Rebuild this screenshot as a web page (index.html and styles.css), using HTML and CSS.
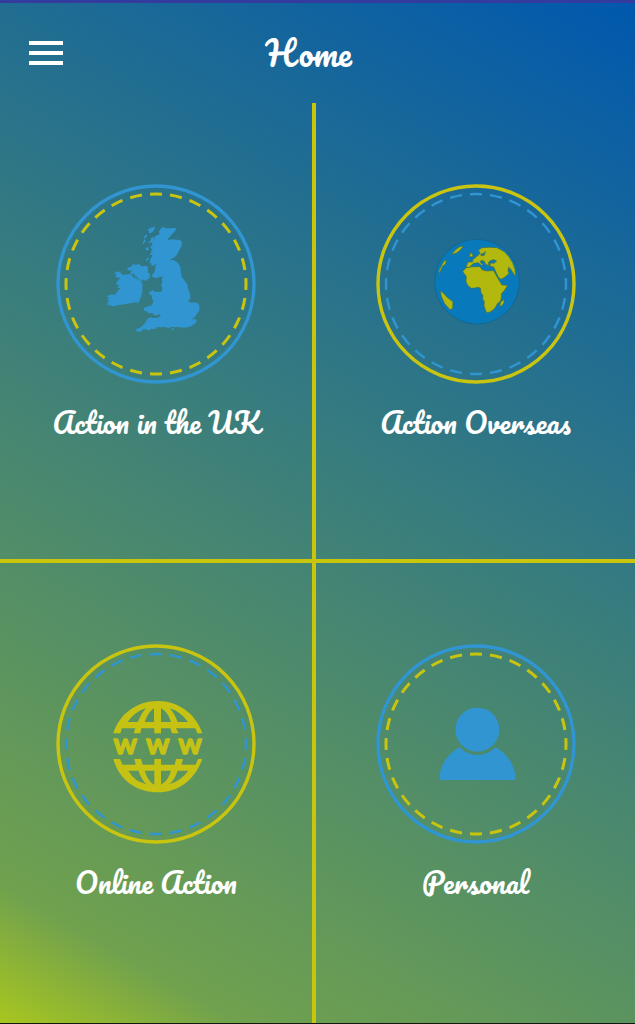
FILE: index.html
```html
<!DOCTYPE html>
<html lang="en">
<head>
<meta charset="utf-8">
<meta name="viewport" content="width=device-width, initial-scale=1">
<title>Home</title>
<link rel="stylesheet" href="styles.css">
</head>
<body>
<div class="app">
  <header class="header">
    <button class="menu" type="button" aria-label="Open menu">
      <span class="menu-bar"></span>
      <span class="menu-bar"></span>
      <span class="menu-bar"></span>
    </button>
    <h1 class="title">Home</h1>
  </header>
  <main class="grid">
    <a class="tile" href="#uk">
      <svg class="badge" viewBox="0 0 200 200" aria-hidden="true">
        <circle class="ring blue-line" cx="100" cy="100" r="98"/>
        <circle class="dashes yellow-line" cx="100" cy="100" r="90" pathLength="280"/>
        <g class="blue" transform="translate(39 31) scale(.33333)">
          <path d="M205 35l5 5 32-1 1 6-12 13-9 10-5 8 12-3 25 2 8 6-2 10-7 15-7 13-10 9-12 7 14 1 10 7 8 13 2 17 2 13 9 11 8 11 3 16 5 11 1 16-6 6 6 6 10-1 13 3 5 9-2 14-7 10-7 10-9 5 14 0 3 5-8 10-13 7-17 3-18-2-10 1-12-2-7 5-10-4-15 1-9-1-7 6-12-1-6 6-10-4-10 1-7 8-7-4-7 1 3-6 11-5 9-7 7-8 6-11 9-5 10 2 13-1 9-7-6-3-12 4-8-8-13 1-4-7-8-1-1-8 10-4 14-5 5-9-4-12-2-9-6-2-2-6 8-3 4-5 5 6 12 1 9-1 3-10-4-9 4-9-2-10 5-7-11 0-8 4-12-2-5-4 8-10 3-9 1-11 5-8-8 5-7 4-3-8 6-10-4-7 2-12-4-6 3-9 5-8-6-5 5-11 6-6-3-6 7-5 8-2-1-10 7-10z"/>
          <path d="M181 34l-3 10-7 9-9 2 0-7-5-2 8-7 9-2zM155 57l2 4-5 7-6 4 3-9zM149 73l3 4-6 10-4-2 4-7zM168 69l8-3 4 8-5 9-8-1-4 5-1-8 5-2zM151 99l8-2 3 7-7 3zM165 94l9-3 3 6-8 5zM169 112l9-7 1 9-10 6-5 0zM166 131l10-8 5 6-8 12-9 5zM158 128l4 2-5 8-5-2zM180 134l6-5 2 8-6 10-5-1zM178 232l5-3 2 5-6 2zM233 339l5 3-4 4-5-3z"/>
          <path d="M66 169L75 172 83 179 107 177 113 185 121 190 130 195 138 200 143 207 142 218 142 232 138 246 130 264 121 262 105 265 88 268 70 271 52 274 43 270 34 268 42 263 35 262 44 257 34 252 45 248 36 245 41 240 53 238 59 240 68 228 76 220 66 217 74 211 62 207 68 198 75 189 61 186 65 178 57 176z"/>
          <path d="M97 160l11-5 6-8 9 2 10-2 5 7 9-1 10 0 2 9 0 10 6 6-1 12-7 2-4 7-9-6-4 7-9-4-6-8-5-2-2-8-8 2-4-7 5-6-13-1z"/>
          <path class="border" d="M109 178l6-3 3 7 7 1 4 8 8 3 3 3"/>
        </g>
      </svg>
      <span class="label">Action in the UK</span>
    </a>
    <a class="tile" href="#overseas">
      <svg class="badge" viewBox="0 0 200 200" aria-hidden="true">
        <circle class="ring yellow-line" cx="100" cy="100" r="98"/>
        <circle class="dashes thin blue-line" cx="100" cy="100" r="90" pathLength="280"/>
        <g transform="translate(49 46) scale(.33333)">
          <circle class="ocean" cx="156" cy="155" r="127"/>
          <g class="land">
            <path d="M113 125l10-12 12-2 17-1 13 0 6 9 14 4 12-1 9 0 8 15 8 14 9 14 17 1-9 14-10 12 0 12-3 10-9 7-5 10-7 8-10 7-10 2-4-9-4-12 1-11-5-10 1-9-6-9-2-14-9-2-6 2-12 1-10-8-6-12 1-16z"/>
            <path d="M129 96l14 0 0-6 7-7 10-7 5-8-5-7 11-8 20-1 25 1 22 12 14 15 11 18 7 20 2 22-7-10-9-14-5-4-2 10 3 8-9 9-14 9-8-5-8-16-7-16-11-2 1-10 11 1 8-7-8-4-9 2-8 6 2 9-9-2-6-11-8-2-4 5 8 8-3 3-10-9-14 2-7 6-6 6-10-1z"/>
            <path class="sea" d="M166 73l10-3 5-6-3 12-9 1z"/>
            <path d="M136 67l7 6 1 7-13 0 4-5zM116 48l-10 12-12 9-15 5 14-16 12-8zM64 90l-2 12-9 6-9 20-1 17-1-24 8-15 7-13zM46 183l9 6 11 13 18 13-1 20-8 4-16-18-10-22zM237 208l0 10-7 10-6 0 3-12z"/>
          </g>
        </g>
      </svg>
      <span class="label">Action Overseas</span>
    </a>
    <a class="tile" href="#online">
      <svg class="badge" viewBox="0 0 200 200" aria-hidden="true">
        <circle class="ring yellow-line" cx="100" cy="100" r="98"/>
        <circle class="dashes thin blue-line" cx="100" cy="100" r="90" pathLength="280"/>
        <g transform="translate(49 51) scale(.33333)">
          <path class="yellow" fill-rule="evenodd" d="M25 115C43 57 95 18 158 18S273 57 292 115h-15l-6-15H213l8 15h-20l-5-15H168v15h-20v-15h-39l-3 15H86l5-15H51l-5 15zM68 81h30l13-26 12-16Q87 52 68 81zM119 81h28V40Q130 50 119 81zM168 40v41h30Q189 52 168 40zM194 40Q208 54 218 81h31Q226 49 194 40z"/>
          <path class="yellow" fill-rule="evenodd" d="M25 192h20l7 17h40l-4-17h20l5 17h35v-17h20v17h41l4-17h21l-5 17h43l7-17h13C268 257 220 292 158 292S43 257 25 192zM70 227q18 32 54 41-15-16-24-41zM119 227q10 33 29 42v-42zM168 227v42q22-12 30-42zM218 227q-8 25-25 41 36-12 57-41z"/>
          <text class="www" y="177"><tspan x="61">w</tspan><tspan x="158">w</tspan><tspan x="255">w</tspan></text>
        </g>
      </svg>
      <span class="label">Online Action</span>
    </a>
    <a class="tile" href="#personal">
      <svg class="badge" viewBox="0 0 200 200" aria-hidden="true">
        <circle class="ring blue-line" cx="100" cy="100" r="98"/>
        <circle class="dashes yellow-line" cx="100" cy="100" r="90" pathLength="280"/>
        <g class="blue" transform="translate(-6 -4) scale(.33333)">
          <circle cx="322" cy="269" r="66"/>
          <path d="M269 322Q291 345 322 345T376 322C411 341 433 372 437 411Q437 420 429 420H215Q207 420 208 411C212 372 234 341 269 322z"/>
        </g>
      </svg>
      <span class="label">Personal</span>
    </a>
  </main>
</div>
</body>
</html>
```

FILE: styles.css
```css
* {
  box-sizing: border-box;
}

body {
  margin: 0;
  font-family: Pacifico, "Liberation Serif", serif;
  font-weight: 400;
  color: #fff;
}

.app {
  display: flex;
  flex-direction: column;
  min-height: 100vh;
  border-top: 3px solid #333b9f;
  border-bottom: 1px solid #101810;
  background: linear-gradient(30deg, #a8c61f 0%, #70a14e 10%, #0058ae 100%);
}

.header {
  display: grid;
  grid-template-columns: 34px 1fr 34px;
  align-items: center;
  height: 100px;
  padding: 0 47px 0 29px;
}

.menu {
  display: flex;
  flex-direction: column;
  gap: 6px;
  padding: 0;
  border: 0;
  background: none;
  cursor: pointer;
}

.menu-bar {
  width: 100%;
  height: 4px;
  background: #fff;
}

.title {
  margin: 0;
  font-size: 33px;
  line-height: 48px;
  font-weight: 400;
  text-align: center;
}

.grid {
  flex: 1;
  display: grid;
  grid-template-columns: 316fr 319fr;
  grid-template-rows: 1fr 1fr;
}

.tile {
  display: flex;
  flex-direction: column;
  align-items: center;
  gap: 16px;
  padding: 81px 0 24px;
  color: inherit;
  text-decoration: none;
}

.tile:nth-child(odd) {
  border-right: 4px solid #c9c40c;
}

.tile:nth-child(-n+2) {
  border-bottom: 4px solid #c9c40c;
}

.badge {
  width: 200px;
  height: 200px;
}

.label {
  font-size: 28px;
  line-height: 46px;
  white-space: nowrap;
}

.ring {
  fill: none;
  stroke-width: 3.4;
}

.dashes {
  fill: none;
  stroke-width: 3;
  stroke-dasharray: 6 4;
  stroke-dashoffset: 3;
}

.thin {
  stroke-width: 2.4;
}

.blue-line {
  stroke: #3095d0;
}

.yellow-line {
  stroke: #c9c40f;
}

.blue {
  fill: #3095d0;
}

.yellow {
  fill: #c5c214;
}

.border {
  fill: none;
  stroke: #2a7fa8;
  stroke-width: 2;
}

.ocean {
  fill: #087abb;
  stroke: #145f86;
  stroke-width: 2;
}

.land {
  fill: #b2b80e;
  stroke: #4a6e3c;
  stroke-width: 2;
}

.sea {
  fill: #087abb;
}

.www {
  fill: #c5c214;
  stroke: #c5c214;
  stroke-width: 4;
  stroke-linejoin: round;
  font: 700 88px Lato, sans-serif;
  text-anchor: middle;
}
```
